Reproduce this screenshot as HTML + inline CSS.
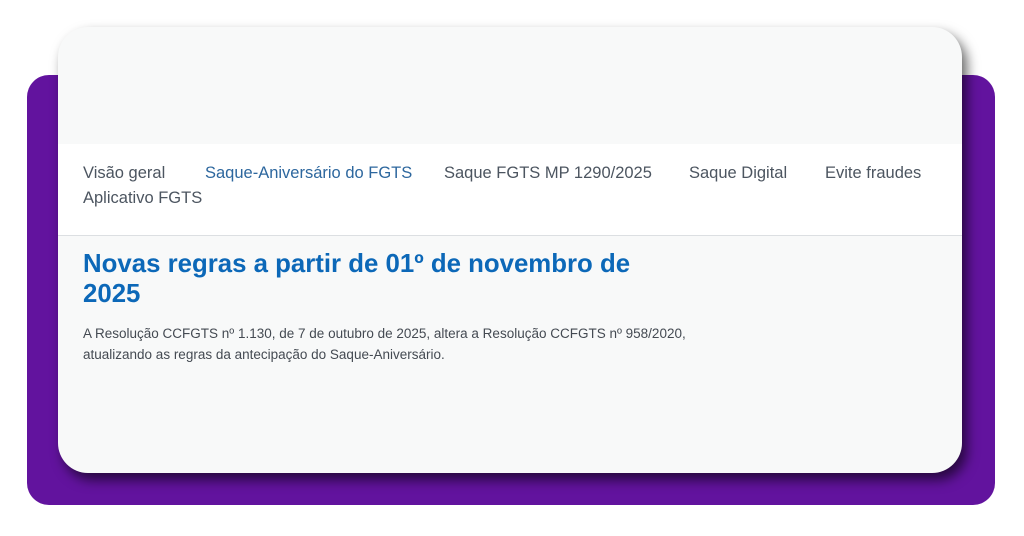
<!DOCTYPE html>
<html><head><meta charset="utf-8"><style>
body{margin:0;width:1024px;height:536px;background:#fff;position:relative;overflow:hidden;font-family:"Liberation Sans",sans-serif}
.p{position:absolute;left:27px;top:75px;width:968px;height:430px;background:#62139e;border-radius:22px}
.c{position:absolute;left:58px;top:27px;width:904px;height:446px;background:#f8f9f9;border-radius:30px;overflow:hidden;box-shadow:5px 7px 12px rgba(0,0,0,.6)}
.nav{position:absolute;left:0;top:117px;width:904px;height:91px;background:#fff;border-bottom:1px solid #dcdfe2}
.nav span{position:absolute;font-size:16.5px;color:#4c5560;top:20px;white-space:nowrap}
h1{position:absolute;left:25px;top:222px;margin:0;width:580px;font-size:25.8px;line-height:30px;color:#0c68b8;font-weight:bold}
p{position:absolute;left:25px;top:296px;margin:0;font-size:13.5px;line-height:21px;color:#444a52}
</style></head><body>
<div class="p"></div>
<div class="c">
<div class="nav">
<span style="left:25px">Visão geral</span>
<span style="left:147px;color:#2d679e">Saque-Aniversário do FGTS</span>
<span style="left:386px">Saque FGTS MP 1290/2025</span>
<span style="left:631px">Saque Digital</span>
<span style="left:767px">Evite fraudes</span>
<span style="left:25px;top:45px">Aplicativo FGTS</span>
</div>
<h1>Novas regras a partir de 01º de novembro de 2025</h1>
<p>A Resolução CCFGTS nº 1.130, de 7 de outubro de 2025, altera a Resolução CCFGTS nº 958/2020,<br>atualizando as regras da antecipação do Saque-Aniversário.</p>
</div>
</body></html>
